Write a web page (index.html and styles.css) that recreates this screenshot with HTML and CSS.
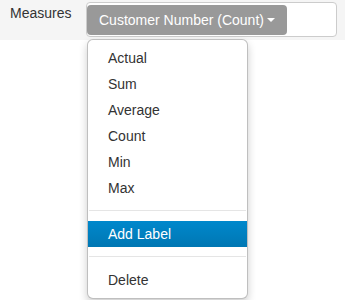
FILE: index.html
```html
<!DOCTYPE html>
<html lang="en">
<head>
    <meta charset="UTF-8"/>
    <title>Measures</title>
    <link rel="stylesheet" href="styles.css">
</head>
<body>
    <div class="bar">
        <label class="bar-label">Measures</label>
        <div class="field">
            <div class="dropdown">
                <button class="btn">Customer Number (Count)<span class="caret"></span></button>
                <ul class="menu">
                    <li><a href="#">Actual</a></li>
                    <li><a href="#">Sum</a></li>
                    <li><a href="#">Average</a></li>
                    <li><a href="#">Count</a></li>
                    <li><a href="#">Min</a></li>
                    <li><a href="#">Max</a></li>
                    <li class="divider"></li>
                    <li class="active"><a href="#">Add Label</a></li>
                    <li class="divider"></li>
                    <li><a href="#">Delete</a></li>
                </ul>
            </div>
        </div>
    </div>
</body>
</html>
```

FILE: styles.css
```css
html, body{
    min-height: 300px;
}

body{
    margin: 0;
    font-family: "Liberation Sans", Arial, sans-serif;
    font-size: 14px;
    color: #333;
    background: #fff;
}

.bar{
    display: flex;
    align-items: flex-start;
    background: #f5f5f5;
    height: 40px;
    padding: 2px 8px 0 10px;
    box-sizing: border-box;
}

.bar-label{
    width: 76px;
    line-height: 20px;
    padding-top: 1px;
}

.field{
    width: 251px;
    height: 35px;
    box-sizing: border-box;
    background: #fff;
    border: 1px solid #ccc;
    border-radius: 4px;
    padding: 2px 0 0 0;
}

.dropdown{
    position: relative;
}

.btn{
    display: flex;
    align-items: center;
    width: 200px;
    height: 30px;
    padding: 0 12px;
    border: none;
    border-radius: 4px;
    background: #999;
    color: #fff;
    font-family: inherit;
    font-size: 14px;
}

.caret{
    display: inline-block;
    margin-left: 3px;
    border-top: 4px solid #fff;
    border-left: 4px solid transparent;
    border-right: 4px solid transparent;
}

.menu{
    position: absolute;
    top: 34px;
    left: 0;
    z-index: 10;
    width: 161px;
    box-sizing: border-box;
    margin: 0;
    padding: 5px 0;
    list-style: none;
    background: #fff;
    border: 1px solid rgba(0, 0, 0, 0.25);
    border-radius: 6px;
    box-shadow: 0 4px 8px rgba(0, 0, 0, 0.2);
}

.menu a{
    display: block;
    padding: 3px 20px;
    line-height: 20px;
    color: #333;
    text-decoration: none;
}

.menu .active a{
    color: #fff;
    background: linear-gradient(#0088cc, #0077b3);
}

.divider{
    height: 1px;
    margin: 9px 1px;
    background: #e5e5e5;
    border-bottom: 1px solid #fff;
}
```
